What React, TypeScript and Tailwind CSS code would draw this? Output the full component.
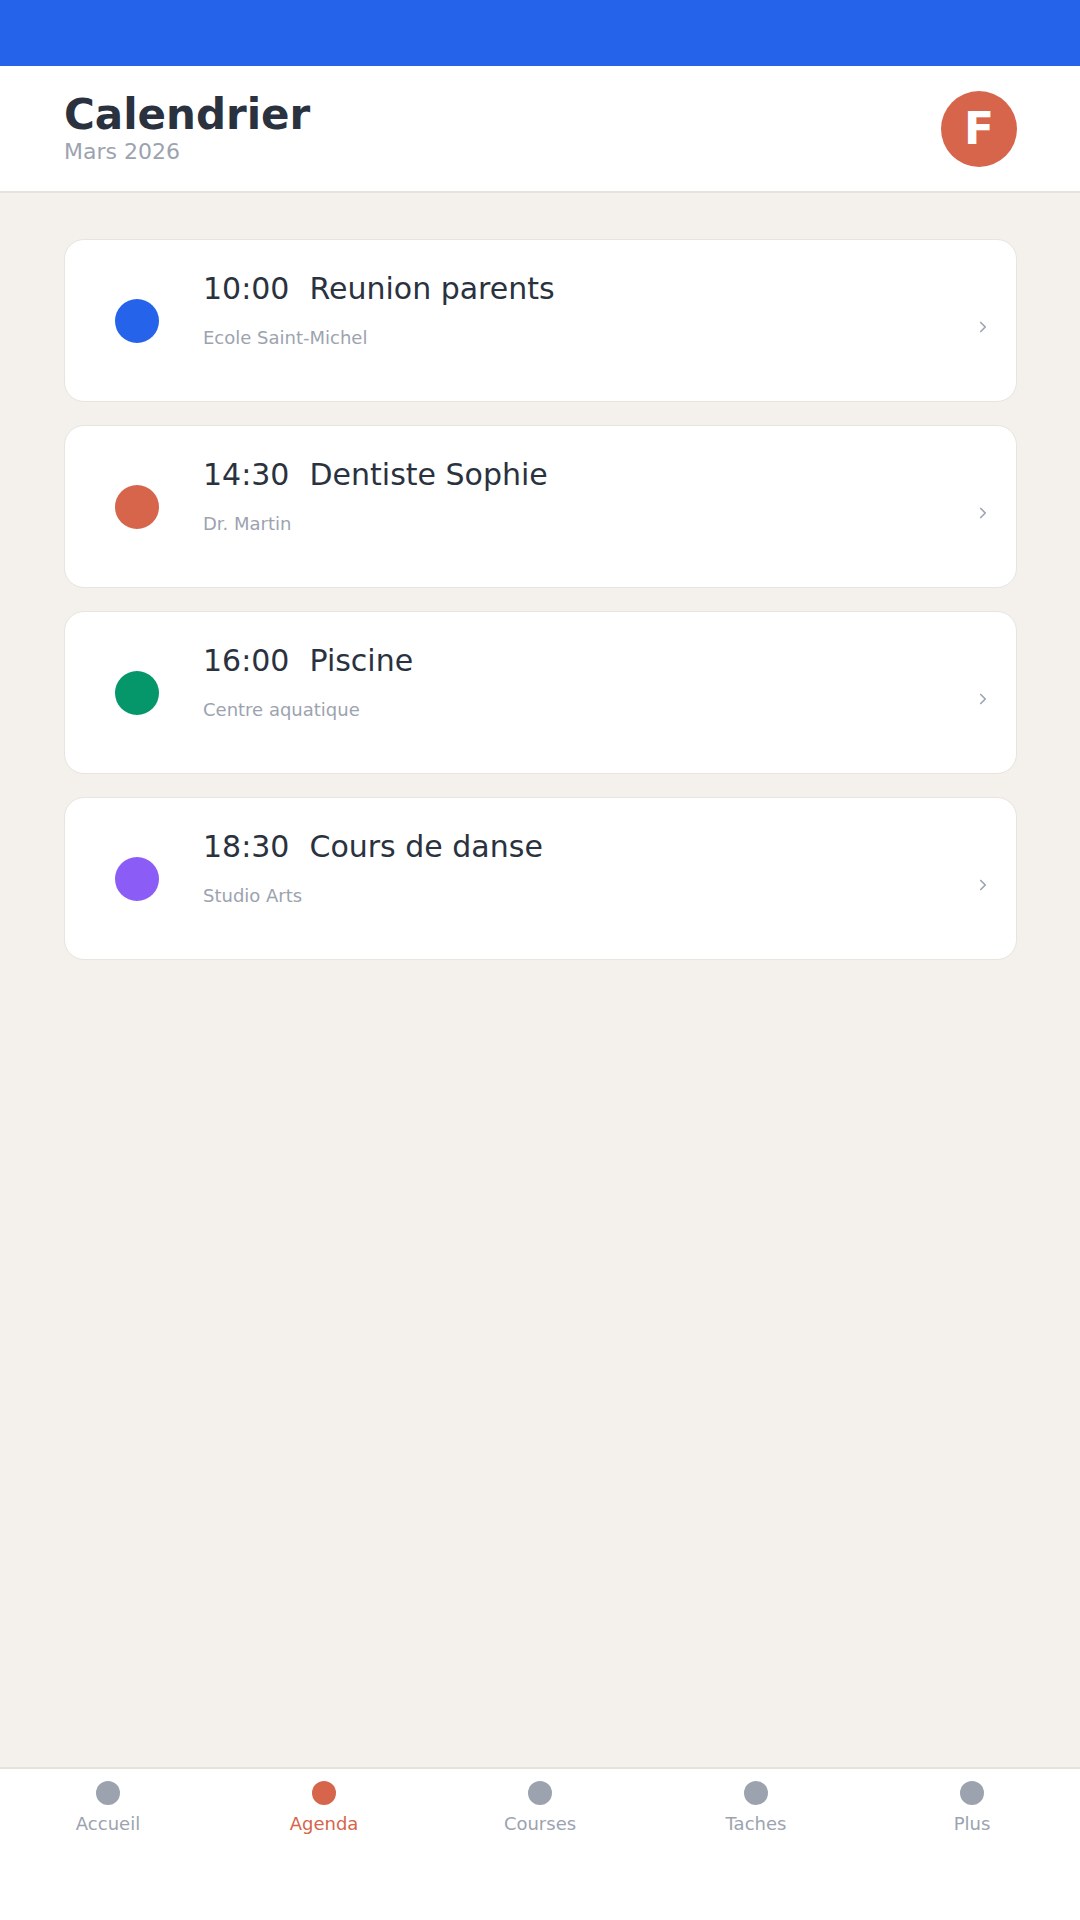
import { ChevronRight } from 'lucide-react';

interface AgendaEvent {
  time: string;
  title: string;
  place: string;
  dot: string;
}

const EVENTS: AgendaEvent[] = [
  { time: '10:00', title: 'Reunion parents', place: 'Ecole Saint-Michel', dot: 'bg-[#2563eb]' },
  { time: '14:30', title: 'Dentiste Sophie', place: 'Dr. Martin', dot: 'bg-[#d6654b]' },
  { time: '16:00', title: 'Piscine', place: 'Centre aquatique', dot: 'bg-[#059669]' },
  { time: '18:30', title: 'Cours de danse', place: 'Studio Arts', dot: 'bg-[#8b5cf6]' },
];

const TABS = ['Accueil', 'Agenda', 'Courses', 'Taches', 'Plus'];

function EventCard({ event }: { event: AgendaEvent }) {
  return (
    <div className="flex h-[163px] items-center rounded-[20px] border border-[#e8e4de] bg-white pl-12 pr-[24px]">
      <div className="flex w-12 shrink-0 justify-center">
        <div className={`h-11 w-11 rounded-full ${event.dot}`} />
      </div>
      <div className="ml-[42px] flex flex-1 flex-col pb-[18px]">
        <div className="flex gap-5 text-[30px] leading-[36px] text-[#2a3240]">
          <span>{event.time}</span>
          <span>{event.title}</span>
        </div>
        <div className="mt-[17px] text-[18px] leading-[28px] text-[#9ca3af]">{event.place}</div>
      </div>
      <ChevronRight className="mt-3 h-[18px] w-[18px] text-[#9ca3af]" strokeWidth={2.2} />
    </div>
  );
}

export default function App() {
  return (
    <div className="flex h-[1920px] w-[1080px] flex-col bg-[#f4f1ec] font-['DejaVu_Sans',sans-serif]">
      {/* Status bar */}
      <div className="h-[66px] bg-[#2563eb]" />

      {/* Header */}
      <header className="flex h-[127px] items-center justify-between border-b-2 border-[#e6e2dc] bg-white pl-16 pr-[63px]">
        <div className="flex flex-col">
          <h1 className="text-[42px] font-bold leading-[46px] text-[#2a3240]">Calendrier</h1>
          <p className="text-[22px] leading-[28px] text-[#9ca3af]">Mars 2026</p>
        </div>
        <div className="flex h-[76px] w-[76px] items-center justify-center rounded-full bg-[#d6654b] text-[44px] font-bold text-white">
          F
        </div>
      </header>

      {/* Events */}
      <main className="flex flex-1 flex-col gap-[23px] pl-16 pr-[63px] pt-[46px]">
        {EVENTS.map((event) => (
          <EventCard key={event.time} event={event} />
        ))}
      </main>

      {/* Bottom nav */}
      <nav className="grid h-[153px] grid-cols-5 border-t-2 border-[#e6e2dc] bg-white">
        {TABS.map((tab) => {
          const active = tab === 'Agenda';
          return (
            <div key={tab} className="flex flex-col items-center pt-3">
              <div className={`h-6 w-6 rounded-full ${active ? 'bg-[#d6654b]' : 'bg-[#9ca3af]'}`} />
              <span className={`mt-[5px] text-[18px] leading-[27px] ${active ? 'text-[#d6654b]' : 'text-[#9ca3af]'}`}>
                {tab}
              </span>
            </div>
          );
        })}
      </nav>
    </div>
  );
}
